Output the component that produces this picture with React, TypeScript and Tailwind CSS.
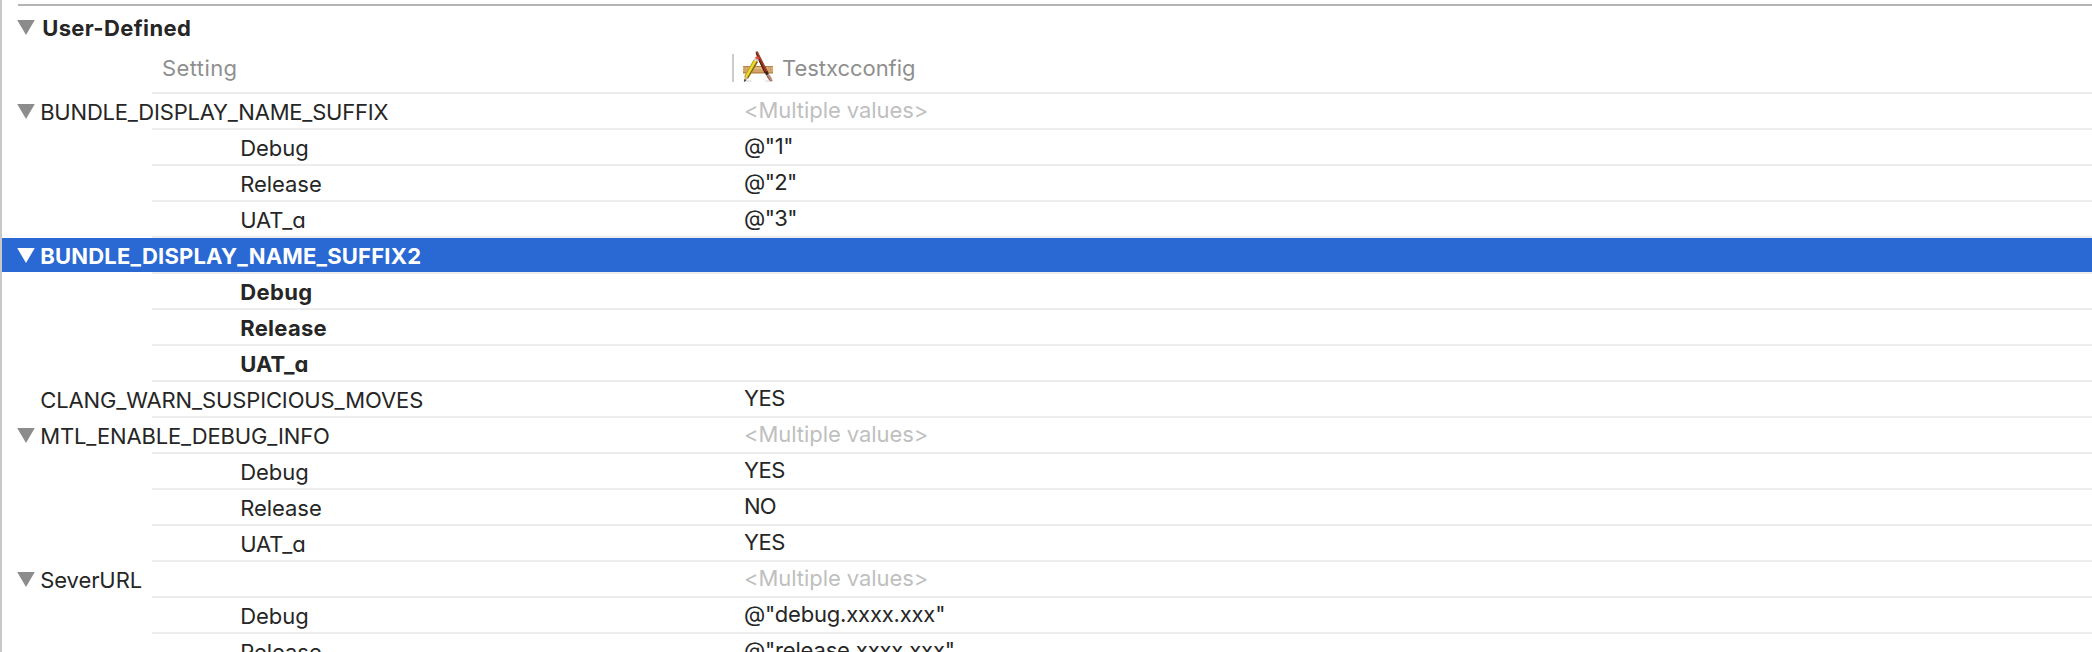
type Row = {
  label: string;
  value?: string;
  child?: boolean;
  open?: boolean;
  bold?: boolean;
  muted?: boolean;
  selected?: boolean;
  tracking: string;
  valueTracking?: string;
};

const MULTIPLE = "<Multiple values>";

const rows: Row[] = [
  { label: "BUNDLE_DISPLAY_NAME_SUFFIX", value: MULTIPLE, open: true, muted: true, tracking: "tracking-[-0.21px]", valueTracking: "tracking-[-0.06px]" },
  { label: "Debug", value: '@"1"', child: true, tracking: "tracking-[-0.05px]", valueTracking: "tracking-[-0.4px]" },
  { label: "Release", value: '@"2"', child: true, tracking: "tracking-[-0.05px]", valueTracking: "tracking-[-0.6px]" },
  { label: "UAT_ɑ", value: '@"3"', child: true, tracking: "tracking-[-0.06px]", valueTracking: "tracking-[-0.6px]" },
  { label: "BUNDLE_DISPLAY_NAME_SUFFIX2", open: true, bold: true, selected: true, tracking: "tracking-[0.2px]" },
  { label: "Debug", child: true, bold: true, tracking: "tracking-[0.36px]" },
  { label: "Release", child: true, bold: true, tracking: "tracking-[0.29px]" },
  { label: "UAT_ɑ", child: true, bold: true, tracking: "tracking-[0.04px]" },
  { label: "CLANG_WARN_SUSPICIOUS_MOVES", value: "YES", tracking: "tracking-[-0.12px]", valueTracking: "tracking-[-0.5px]" },
  { label: "MTL_ENABLE_DEBUG_INFO", value: MULTIPLE, open: true, muted: true, tracking: "tracking-[-0.14px]", valueTracking: "tracking-[-0.06px]" },
  { label: "Debug", value: "YES", child: true, tracking: "tracking-[-0.05px]", valueTracking: "tracking-[-0.5px]" },
  { label: "Release", value: "NO", child: true, tracking: "tracking-[-0.05px]", valueTracking: "tracking-[-0.8px]" },
  { label: "UAT_ɑ", value: "YES", child: true, tracking: "tracking-[-0.06px]", valueTracking: "tracking-[-0.5px]" },
  { label: "SeverURL", value: MULTIPLE, open: true, muted: true, tracking: "tracking-[-0.08px]", valueTracking: "tracking-[-0.06px]" },
  { label: "Debug", value: '@"debug.xxxx.xxx"', child: true, tracking: "tracking-[-0.05px]", valueTracking: "tracking-[-0.19px]" },
  { label: "Release", value: '@"release.xxxx.xxx"', child: true, tracking: "tracking-[-0.05px]", valueTracking: "tracking-[-0.19px]" },
];

function Triangle({ className }: { className: string }) {
  return (
    <svg className={`h-[15px] w-[18px] shrink-0 ${className}`} viewBox="0 0 18 15">
      <path d="M0.2 0H17.8L9 15Z" fill="currentColor" />
    </svg>
  );
}

function AppIcon() {
  return (
    <svg className="h-[31px] w-[30px] shrink-0" viewBox="33 12 90 93">
      <ellipse cx="47" cy="102" rx="14" ry="2.5" fill="#dedede" />
      <ellipse cx="110" cy="102" rx="13" ry="2.5" fill="#dedede" />
      <rect x="33" y="58" width="90" height="21" fill="#d5a468" />
      <rect x="33" y="57" width="90" height="3" fill="#b9854c" />
      <rect x="33" y="61" width="90" height="5" fill="#e4bb84" />
      <rect x="33" y="76" width="90" height="3" fill="#b07a42" />
      <path d="M39 60v7M46 60v5M53 60v7M95 60v5M102 60v7M109 60v5M116 60v7" stroke="#94683a" strokeWidth="1.6" />
      <path d="M71 14L77 13L85 29L108 74L98 79L78 36Z" fill="#8a2f1a" />
      <path d="M76 15L83 29L105 74" stroke="#bd5436" strokeWidth="2" fill="none" />
      <path d="M72 17L79 36L99 78" stroke="#4a1a12" strokeWidth="2.6" fill="none" />
      <path d="M98 76L106 72L111 81L103 86Z" fill="#3f2521" />
      <path d="M103 86L111 81Q120 92 122 101Q118 105 114 102Q107 96 103 86Z" fill="#b98d7f" />
      <path d="M106 87Q110 96 117 102" stroke="#77493f" strokeWidth="2.4" fill="none" />
      <path d="M65 38L78 45L48 95L37 88Z" fill="#efd92c" />
      <path d="M78 45L48 95L45 93L74 42Z" fill="#7d6718" />
      <path d="M65 38L37 88L39 89L67 39Z" fill="#a3902c" />
      <path d="M38 88L48 94L37 104Z" fill="#cdb083" />
      <path d="M37.500 96L43 99.500L36 105Z" fill="#2d2b29" />
      <path d="M69 33L80 39L77 44L66 38Z" fill="#c6cad0" />
      <path d="M71 30Q76 25 81 31Q84 35 80 39L69 33Z" fill="#e2453c" />
    </svg>
  );
}

function SettingRow({ row }: { row: Row }) {
  const labelColor = row.selected ? "text-white" : "text-[#262626]";
  return (
    <li>
      <div className={`flex h-[34px] items-start ${row.selected ? "bg-[#2a69d3]" : ""}`}>
        <div className={`flex w-[742px] shrink-0 items-start leading-[36px] ${row.child ? "pl-[238.2px]" : "pl-[15px]"}`}>
          {!row.child && (
            <span className="flex w-[23.2px] shrink-0 pt-[10px]">
              {row.open && <Triangle className={row.selected ? "text-white" : "text-[#8c8c8c]"} />}
            </span>
          )}
          <span className={`${labelColor} ${row.bold ? "font-bold" : ""} ${row.tracking}`}>{row.label}</span>
        </div>
        {row.value && (
          <span className={`leading-[32px] ${row.muted ? "text-[#bfbfbf]" : "text-[#262626]"} ${row.valueTracking}`}>
            {row.value}
          </span>
        )}
      </div>
      <div className="ml-[150px] h-[2px] bg-[#ededed]" />
    </li>
  );
}

export default function App() {
  return (
    <main className="h-[652px] w-full overflow-hidden whitespace-nowrap border-l-2 border-[#c8c8c8] bg-white pt-1 font-['Inter','Liberation_Sans',sans-serif] text-[22px]">
      <div className="ml-4 h-[2px] bg-[#b5b5b5]" />
      <header className="flex h-[38px] items-start pl-[15px] leading-[44px] text-[#262626]">
        <Triangle className="mt-[14px] text-[#8c8c8c]" />
        <h1 className="ml-[7.2px] font-bold tracking-[0.37px]">User-Defined</h1>
      </header>
      <div className="flex h-[48px] items-start text-[#8f8f8f]">
        <span className="w-[730px] shrink-0 pl-[160px] leading-[48px] tracking-[0.4px]">Setting</span>
        <div className="mt-[10px] h-[28px] w-[2px] bg-[#cccccc]" />
        <div className="ml-[9px] mt-[7px]">
          <AppIcon />
        </div>
        <span className="ml-[9px] leading-[48px] tracking-[-0.04px]">Testxcconfig</span>
      </div>
      <div className="ml-[150px] h-[2px] bg-[#ededed]" />
      <ul>
        {rows.map((row, i) => (
          <SettingRow key={i} row={row} />
        ))}
      </ul>
    </main>
  );
}
